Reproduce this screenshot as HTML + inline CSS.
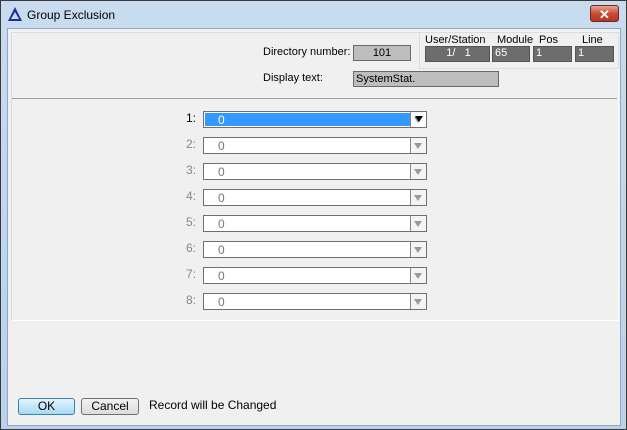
<!DOCTYPE html><html><head><style>
body{margin:0;width:627px;height:430px;overflow:hidden;font-family:"Liberation Sans",sans-serif;font-size:11px;}
.win{position:absolute;left:0;top:0;width:625px;height:428px;border:1px solid #3a3a3a;background:linear-gradient(#c9dcef,#b9d1ea);}
.client{position:absolute;left:7px;top:28px;width:612px;height:396px;background:#f0f0f0;border:1px solid #8ea8c4;}
.a{position:absolute;}
.box{position:absolute;background:#bdbdbd;border:1px solid #6a6a6a;}
.dark{position:absolute;background:#6d6d6d;border:1px solid #555;color:#fff;font-size:11px;padding-left:2px;box-sizing:border-box;}
.cb{position:absolute;left:203px;width:224px;height:17px;border:1px solid #707070;box-sizing:border-box;background:#fff;}
.cb span{position:absolute;left:14px;top:1px;color:#777;font-size:12px}
.cb i{position:absolute;right:0;top:0;width:15px;height:15px;border-left:1px solid #888;background:#f4f4f4}
.cb i:after{content:"";position:absolute;left:3px;top:5px;border-left:4px solid transparent;border-right:4px solid transparent;border-top:6px solid #999}
.lbl{position:absolute;width:20px;left:176px;text-align:right;color:#888;font-size:12px}
</style></head><body>
<div class="win"></div>
<div class="a" style="left:8px;top:7px;width:0;height:0;border-left:7px solid transparent;border-right:7px solid transparent;border-bottom:14px solid #1b2fa0"></div>
<div class="a" style="left:11px;top:12px;width:0;height:0;border-left:4px solid transparent;border-right:4px solid transparent;border-bottom:7px solid #c9dcef"></div>
<div class="a" style="left:27px;top:8px;font-size:12px;color:#000">Group Exclusion</div>
<div class="a" style="left:590px;top:5px;width:29px;height:17px;border:1px solid #6b2a22;border-radius:3px;background:linear-gradient(#e8a698,#c94c36 50%,#b8341f);color:#fff;font-weight:bold;text-align:center;font-size:13px;line-height:17px;box-sizing:border-box">✕</div>
<div class="client"></div>
<div class="a" style="left:11px;top:32px;width:606px;height:287px;border:1px solid #d7dde5;border-right-color:#fff;border-bottom-color:#fff"></div>
<div class="a" style="left:419px;top:32px;width:198px;height:35px;border:1px solid #d7dde5;"></div>
<div class="a" style="left:12px;top:98px;width:605px;height:1px;background:#a0a0a0"></div>
<div class="a" style="left:263px;top:46px;">Directory number:</div>
<div class="box" style="left:353px;top:45px;width:56px;height:14px;text-align:center;line-height:14px">101</div>
<div class="a" style="left:263px;top:72px;">Display text:</div>
<div class="box" style="left:353px;top:71px;width:144px;height:14px;line-height:14px;padding-left:2px;box-sizing:content-box;width:142px">SystemStat.</div>
<div class="a" style="left:425px;top:34px;">User/Station</div>
<div class="a" style="left:497px;top:34px;">Module</div>
<div class="a" style="left:539px;top:34px;">Pos</div>
<div class="a" style="left:582px;top:34px;">Line</div>
<div class="dark" style="left:425px;top:46px;width:65px;height:16px;text-align:center">1/&nbsp;&nbsp;&nbsp;1</div>
<div class="dark" style="left:492px;top:46px;width:38px;height:16px">65</div>
<div class="dark" style="left:533px;top:46px;width:39px;height:16px">1</div>
<div class="dark" style="left:575px;top:46px;width:39px;height:16px">1</div>

<div class="lbl" style="top:111px;color:#000">1:</div>
<div class="cb" style="top:111px"><div class="a" style="left:1px;top:1px;width:207px;height:13px;background:#3399ff"></div><span style="color:#fff">0</span><i style="background:#fff"></i></div>
<div class="a" style="left:415px;top:116px;border-left:4px solid transparent;border-right:4px solid transparent;border-top:6px solid #000"></div>
<div class="lbl" style="top:137px">2:</div><div class="cb" style="top:137px"><span>0</span><i></i></div>
<div class="lbl" style="top:163px">3:</div><div class="cb" style="top:163px"><span>0</span><i></i></div>
<div class="lbl" style="top:189px">4:</div><div class="cb" style="top:189px"><span>0</span><i></i></div>
<div class="lbl" style="top:215px">5:</div><div class="cb" style="top:215px"><span>0</span><i></i></div>
<div class="lbl" style="top:241px">6:</div><div class="cb" style="top:241px"><span>0</span><i></i></div>
<div class="lbl" style="top:267px">7:</div><div class="cb" style="top:267px"><span>0</span><i></i></div>
<div class="lbl" style="top:293px">8:</div><div class="cb" style="top:293px"><span>0</span><i></i></div>

<div class="a" style="left:18px;top:398px;width:57px;height:17px;border:1px solid #3c7fb1;border-radius:3px;background:linear-gradient(#e5f4fc,#a7d9f5);box-sizing:border-box;text-align:center;line-height:15px;font-size:12px">OK</div>
<div class="a" style="left:81px;top:398px;width:58px;height:17px;border:1px solid #707070;border-radius:3px;background:linear-gradient(#f2f2f2,#dcdcdc);box-sizing:border-box;text-align:center;line-height:15px;font-size:12px">Cancel</div>
<div class="a" style="left:149px;top:398px;font-size:12px">Record will be Changed</div>
</body></html>
